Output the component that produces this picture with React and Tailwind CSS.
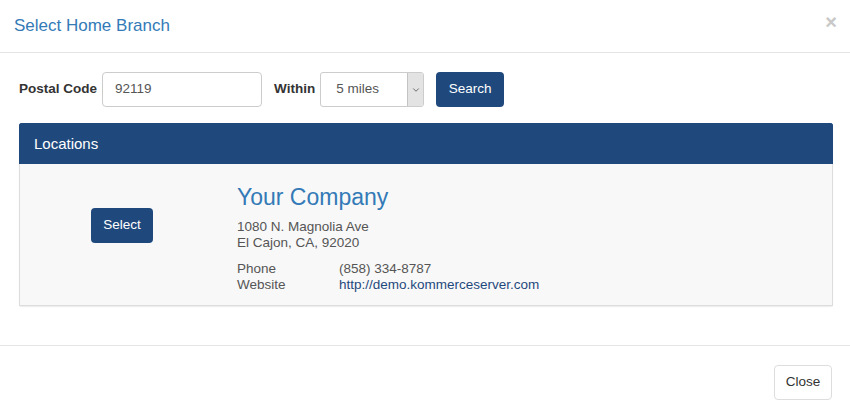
import { ChevronDown } from 'lucide-react';

export default function App() {
  return (
    <div className="w-[850px] h-[419px] bg-white text-[13.5px] text-[#333] overflow-hidden" style={{ fontFamily: '"Liberation Sans", Arial, sans-serif' }}>
      {/* Header */}
      <div className="h-[53px] border-b border-[#e5e5e5] flex items-center justify-between pl-[14px] pr-[13px]">
        <h4 className="text-[17px] leading-[21px] text-[#337ab7] pb-[2px]">Select Home Branch</h4>
        <span className="text-[20px] font-bold leading-none text-[#c8c8c8] pb-[8px]">×</span>
      </div>

      {/* Body */}
      <div className="pl-[19px] pr-[17px] pt-[19px] pb-[39px]">
        <div className="flex items-center h-[35px]">
          <label className="font-bold text-[13.5px] text-[#333]">Postal Code</label>
          <div className="ml-[5px] w-[160px] h-[35px] border border-[#ccc] rounded-[4px] bg-white flex items-center px-[12px] text-[#555]">92119</div>
          <label className="ml-[12px] font-bold text-[13.5px] text-[#333]">Within</label>
          <div className="ml-[5px] w-[104px] h-[35px] border border-[#ccc] rounded-[3px] bg-white flex items-stretch overflow-hidden">
            <span className="flex-1 flex items-center pl-[15px] text-[#555]">5 miles</span>
            <span className="w-[16px] bg-[#e3e3e3] border-l border-[#c4c4c4] flex items-center justify-center">
              <ChevronDown className="w-[10px] h-[10px] text-[#555]" strokeWidth={2} />
            </span>
          </div>
          <button className="ml-[12px] w-[68px] h-[35px] rounded-[4px] bg-[#1f497d] text-white text-[13.5px]">Search</button>
        </div>

        {/* Panel */}
        <div className="mt-[16px] border border-[#1f497d] rounded-[2px] shadow-[0_1px_1px_rgba(0,0,0,0.08)]">
          <div className="h-[40px] bg-[#1f497d] flex items-center px-[14px] text-white text-[15px]">Locations</div>
          <div className="bg-[#f8f8f8] border-x border-b border-[#ddd] -mx-px -mb-px flex pt-[18px] pb-[12px]">
            <div className="w-[217px] pl-[71px] pt-[26px]">
              <button className="w-[62px] h-[35px] rounded-[4px] bg-[#1f497d] text-white text-[13.5px]">Select</button>
            </div>
            <div className="flex flex-col">
              <h3 className="text-[23px] leading-[30px] text-[#337ab7]">Your Company</h3>
              <div className="mt-[7px] leading-[16px] text-[#555]">
                <div>1080 N. Magnolia Ave</div>
                <div>El Cajon, CA, 92020</div>
              </div>
              <div className="mt-[10px] leading-[16px] text-[#555] grid grid-cols-[102px_auto]">
                <span>Phone</span>
                <span>(858) 334-8787</span>
                <span>Website</span>
                <span className="text-[#1f497d]">http://demo.kommerceserver.com</span>
              </div>
            </div>
          </div>
        </div>
      </div>

      {/* Footer */}
      <div className="border-t border-[#e5e5e5] flex justify-end pt-[19px] pr-[18px]">
        <button className="w-[58px] h-[35px] rounded-[4px] border border-[#ddd] bg-white text-[#333] text-[13.5px]">Close</button>
      </div>
    </div>
  );
}
